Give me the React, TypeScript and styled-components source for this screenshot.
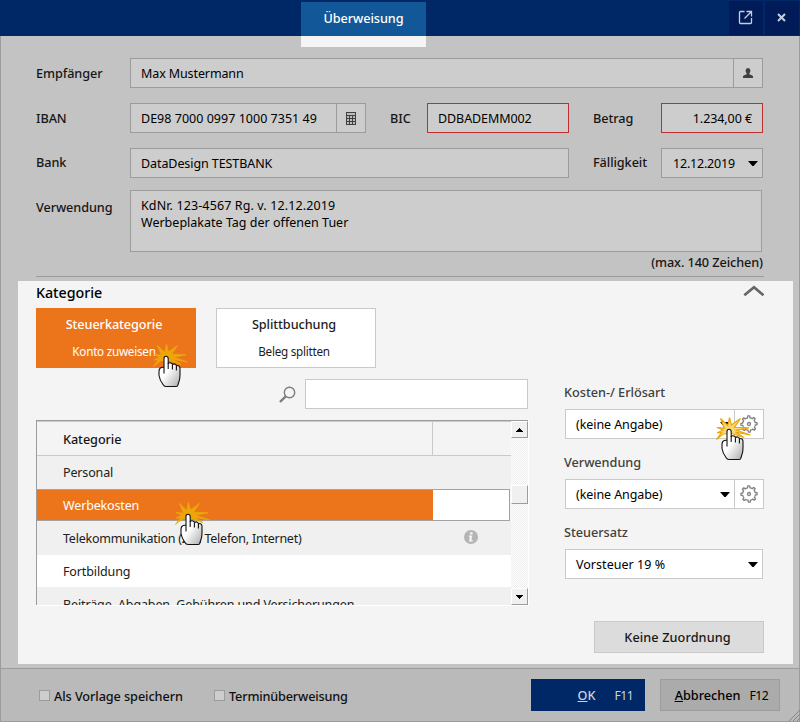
import React from "react";
import styled, { createGlobalStyle, css } from "styled-components";

const Global = createGlobalStyle`
  * { box-sizing: border-box; }
  body { margin: 0; background: #c3c3c3; }
`;

const medium = css`
  font-size: 12.7px;
  font-weight: 500;
  letter-spacing: -0.08px;
`;

const Window = styled.div`
  width: 800px;
  height: 722px;
  display: flex;
  flex-direction: column;
  overflow: hidden;
  font-family: "Noto Sans", "Open Sans", sans-serif;
  font-size: 12.5px;
  line-height: 18px;
  color: #000;
  background: #c3c3c3;
  white-space: nowrap;
`;

const TitleBar = styled.header`
  height: 36px;
  flex: none;
  display: flex;
  align-items: flex-start;
  padding: 0 1px 0 301px;
  background: #002766;
`;

const ActiveTab = styled.div`
  width: 125px;
  height: 45px;
  flex: none;
  margin: 2px auto 0 0;
  border-bottom: 11px solid #f4f4f4;
  background: #125899;
  color: #fff;
  ${medium}
  line-height: 33px;
  text-align: center;
`;

const TitleButton = styled.button`
  width: 34px;
  height: 34px;
  margin: 1px 0 0 2px;
  padding: 0 2px 2px 0;
  border: 0;
  display: flex;
  align-items: center;
  justify-content: center;
  background: #001b57;
`;

const Body = styled.main`
  flex: 1;
  display: flex;
  flex-direction: column;
  border: solid #9c9c9c;
  border-width: 0 1px;
`;

const Form = styled.section`
  height: 241px;
  margin: 0 35px;
  padding-top: 22px;
  display: flex;
  flex-direction: column;
  border-bottom: 1px solid #9c9c9c;
`;

const FormRow = styled.div<{ $gap?: number }>`
  display: flex;
  align-items: flex-start;
  margin-bottom: ${(p) => p.$gap ?? 15}px;
`;

const Label = styled.label<{ $w: number; $top?: number }>`
  width: ${(p) => p.$w}px;
  flex: none;
  padding-top: ${(p) => p.$top ?? 6}px;
  ${medium}
  color: #161616;
`;

const Field = styled.div<{ $w: number; $mr?: number; $error?: boolean; $right?: boolean }>`
  width: ${(p) => p.$w}px;
  height: 30px;
  flex: none;
  margin-right: ${(p) => p.$mr ?? 0}px;
  display: flex;
  align-items: stretch;
  justify-content: ${(p) => (p.$right ? "flex-end" : "space-between")};
  padding-left: 10px;
  ${(p) => p.$right && css`padding-right: 10px;`}
  border: 1px solid ${(p) => (p.$error ? "#c02f2f" : "#9c9c9c")};
  background: #cdcdcd;
  line-height: 29px;
`;

const Purpose = styled.div`
  width: 632px;
  height: 62px;
  padding: 6px 10px;
  border: 1px solid #9c9c9c;
  background: #cdcdcd;
  line-height: 17px;
`;

const Value = styled.span<{ $ls?: number; $pad?: number }>`
  letter-spacing: ${(p) => p.$ls ?? -0.08}px;
  padding-left: ${(p) => p.$pad ?? 0}px;
`;

const FieldButton = styled.span<{ $light?: boolean }>`
  width: 29px;
  display: flex;
  align-items: center;
  justify-content: center;
  padding: ${(p) => (p.$light ? "0 1px 1px 0" : "0")};
  border-left: 1px solid ${(p) => (p.$light ? "#c9c9c9" : "#9c9c9c")};
`;

const ArrowBox = styled.span`
  display: flex;
  align-items: center;
  margin-left: auto;
  padding-right: 4px;
`;

const Hint = styled.div`
  align-self: flex-end;
  margin: 1px 1px 0 0;
  ${medium}
  color: #161616;
`;

const Panel = styled.section`
  width: 775px;
  height: 383px;
  margin: 4px 0 0 17px;
  padding: 0 29px 0 18px;
  display: flex;
  flex-direction: column;
  background: #f4f4f4;
`;

const PanelHead = styled.h2`
  height: 27px;
  margin: 0;
  display: flex;
  justify-content: space-between;
  align-items: flex-start;
  padding-top: 3px;
  font-size: 14.3px;
  font-weight: 500;
  letter-spacing: -0.05px;
`;

const Tiles = styled.div`
  display: flex;
  gap: 20px;
`;

const Tile = styled.button<{ $active?: boolean }>`
  position: relative;
  width: 160px;
  height: 60px;
  padding: 6px 4px 0 0;
  display: flex;
  flex-direction: column;
  align-items: center;
  gap: 9px;
  border: 1px solid ${(p) => (p.$active ? "#ec751b" : "#c9c9c9")};
  background: ${(p) => (p.$active ? "#ec751b" : "#fff")};
  color: ${(p) => (p.$active ? "#fff" : "#1c1c1c")};
  font: inherit;
  line-height: 18px;
`;

const TileTitle = styled.span`
  ${medium}
`;

const TileSub = styled.span`
  font-size: 11.7px;
  letter-spacing: -0.25px;
`;

const Columns = styled.div`
  display: flex;
  justify-content: space-between;
`;

const LeftCol = styled.div`
  width: 493px;
  padding-top: 11px;
`;

const SearchRow = styled.div`
  display: flex;
  justify-content: flex-end;
  align-items: center;
  gap: 9px;
  padding-right: 1px;
  margin-bottom: 11px;
`;

const SearchInput = styled.input`
  width: 223px;
  height: 30px;
  border: 1px solid #c9c9c9;
  background: #fff;
  outline: none;
`;

const Table = styled.div`
  width: 493px;
  height: 186px;
  display: flex;
  border-bottom: 1px solid #fff;
  border-right: 1px solid #fff;
`;

const Grid = styled.div`
  width: 475px;
  overflow: hidden;
  border-left: 1px solid #9c9c9c;
  border-top: 1px solid #9c9c9c;
`;

const HeadRow = styled.div`
  height: 35px;
  display: flex;
  border-top: 1px solid #c9c9c9;
  border-bottom: 1px solid #c9c9c9;
`;

const HeadCell = styled.div<{ $w?: number }>`
  width: ${(p) => (p.$w ? `${p.$w}px` : "auto")};
  padding: 8px 0 0 26px;
  border-right: ${(p) => (p.$w ? "1px solid #c9c9c9" : "0")};
  ${medium}
  color: #161616;
`;

const Row = styled.div<{ $bg?: string; $h?: number; $top?: number }>`
  height: ${(p) => p.$h ?? 33}px;
  display: flex;
  align-items: flex-start;
  justify-content: space-between;
  padding: ${(p) => p.$top ?? 8}px 33px 0 26px;
  background: ${(p) => p.$bg ?? "#f0f0f0"};
  color: #202020;
`;

const SelectedRow = styled.div`
  position: relative;
  height: 32px;
  width: 473px;
  border: 1px solid #a3a3a3;
  border-left-width: 0;
  background: #fff;
  color: #fff;
`;

const SelectedCell = styled.div`
  width: 396px;
  height: 30px;
  padding: 7px 0 0 26px;
  background: #ec751b;
`;

const Scrollbar = styled.div`
  width: 17px;
  display: flex;
  flex-direction: column;
  border-top: 1px solid #9c9c9c;
  background: repeating-conic-gradient(#fff 0 25%, #eeeeee 0 50%) 0 0 / 2px 2px;
`;

const ScrollPiece = styled.div<{ $h: number; $mt?: number }>`
  height: ${(p) => p.$h}px;
  margin-top: ${(p) => p.$mt ?? 0}px;
  display: flex;
  align-items: center;
  justify-content: center;
  border: 1px solid #fff;
  border-right-color: #9c9c9c;
  border-bottom-color: #9c9c9c;
  background: #f0f0f0;
`;

const RightCol = styled.div`
  width: 200px;
  padding-top: 15px;
  display: flex;
  flex-direction: column;
`;

const SideLabel = styled.label`
  height: 26px;
  ${medium}
  letter-spacing: -0.02px;
  color: #404040;
`;

const Select = styled.div<{ $w?: number }>`
  position: relative;
  width: ${(p) => p.$w ?? 199}px;
  height: 30px;
  margin: 0 0 14px 1px;
  padding-left: 10px;
  display: flex;
  border: 1px solid #c9c9c9;
  background: #fff;
  line-height: 29px;
`;

const ClearButton = styled.button`
  width: 170px;
  height: 32px;
  margin-top: 28px;
  padding: 0 3px 0 0;
  align-self: flex-end;
  border: 1px solid #c9c9c9;
  background: #dcdcdc;
  color: #161616;
  font-family: inherit;
  ${medium}
  letter-spacing: 0.1px;
`;

const Footer = styled.footer`
  height: 54px;
  flex: none;
  display: flex;
  align-items: flex-start;
  padding: 10px 19px 0 38px;
  border: 1px solid #9c9c9c;
  background: #bababa;
  position: relative;
`;

const Check = styled.label<{ $w: number }>`
  width: ${(p) => p.$w}px;
  display: flex;
  align-items: center;
  gap: 4px;
  padding-top: 8px;
  ${medium}
  color: #101010;
`;

const CheckText = styled.span<{ $ls?: number }>`
  letter-spacing: ${(p) => p.$ls ?? -0.08}px;
`;

const Box = styled.span`
  width: 11px;
  height: 11px;
  margin-top: -1px;
  border: 1px solid #9c9c9c;
  background: #cdcdcd;
`;

const Action = styled.button<{ $primary?: boolean }>`
  width: ${(p) => (p.$primary ? 114 : 120)}px;
  height: 32px;
  margin-left: ${(p) => (p.$primary ? "auto" : "15px")};
  padding: 0 11px;
  display: flex;
  align-items: center;
  justify-content: flex-end;
  gap: ${(p) => (p.$primary ? 19 : 9)}px;
  border: 1px solid ${(p) => (p.$primary ? "#002766" : "#9c9c9c")};
  background: ${(p) => (p.$primary ? "#002766" : "#ababab")};
  color: ${(p) => (p.$primary ? "#cdd3de" : "#000")};
  font-family: inherit;
  ${medium}
  letter-spacing: 0;
`;

const Key = styled.span`
  font-size: 12.2px;
  font-weight: 400;
  letter-spacing: -0.6px;
`;

const Grip = styled.svg`
  position: absolute;
  right: -1px;
  bottom: 0;
`;

const CursorSvg = styled.svg<{ $x: number; $y: number }>`
  position: absolute;
  left: ${(p) => p.$x}px;
  top: ${(p) => p.$y}px;
  z-index: 2;
  overflow: visible;
`;

function ClickCursor({ x, y, on }: { x: number; y: number; on: "orange" | "white" }) {
  const rays =
    "5.5,2.5 12.8,9.5 14.5,1.5 16.4,9 25.5,2.5 19.5,11.3 34,11.8 21.5,14.2 35.5,19 20.5,16.2 29,21.5 17,17.5 8,18 1.5,23.5 6.5,16.5 2,17 8,14 2,11.5 9.5,12.2";
  return (
    <CursorSvg $x={x} $y={y} width="36" height="45" viewBox="0 0 36 45">
      <defs>
        <linearGradient id={`hand${x}`} x1="0" y1="0" x2="1" y2="1">
          <stop offset="0.45" stopColor="#fff" />
          <stop offset="1" stopColor="#aaa" />
        </linearGradient>
      </defs>
      <polygon
        points={rays}
        fill={on === "orange" ? "#eda50a" : "#f8d878"}
        stroke="#eba70c"
        strokeWidth={on === "orange" ? 0.8 : 1.2}
      />
      <path
        d="M12 30.5V15.5q0-2.3 2-2.3t2.2 2.3V20.5q1-1.2 2.6-.6t1.8 1.6q1.4-1 2.6-.3t1.3 1.7q1.6-.8 2.6.2t.9 2.4V32q0 4-1.2 7l-.9 3q-.2 1.5-1.8 1.5H14q-2 0-3-2-3.5-5-4-9V28q.3-3 2.4-3.5T12 24.5"
        fill={`url(#hand${x})`}
        stroke="#111"
        strokeWidth="1.1"
        strokeLinejoin="round"
      />
      <path d="M16.2 20v6M20.4 21.5v5M24.4 23v4.5" stroke="#111" strokeWidth="1.1" fill="none" />
    </CursorSvg>
  );
}

const DownArrow = () => (
  <svg width="10" height="5" viewBox="0 0 10 5">
    <path d="M0 0h10L5.600 5h-1.200z" fill="#000" />
  </svg>
);

const ScrollArrow = ({ up }: { up?: boolean }) => (
  <svg width="7" height="4" viewBox="0 0 7 4" shapeRendering="crispEdges">
    <path d={up ? "M3 0h1v1h1v1h1v1h1v1H0V3h1V2h1V1h1z" : "M0 0h7v1H6v1H5v1H4v1H3V3H2V2H1V1H0z"} />
  </svg>
);

function Gear() {
  const teeth = Array.from({ length: 80 }, (_, i) => {
    const a = (i / 80) * Math.PI * 2;
    const r = i % 10 < 2 || i % 10 > 7 ? 8.1 : 6.3;
    return `${(9 + r * Math.cos(a)).toFixed(2)},${(9 + r * Math.sin(a)).toFixed(2)}`;
  }).join(" ");
  return (
    <svg width="18" height="18" viewBox="0 0 18 18" fill="none" stroke="#808080" strokeWidth="1.3">
      <polygon points={teeth} strokeLinejoin="round" />
      <circle cx="9" cy="9" r="1.5" />
    </svg>
  );
}

export default function App() {
  return (
    <>
      <Global />
      <Window>
        <TitleBar>
          <ActiveTab>Überweisung</ActiveTab>
          <TitleButton aria-label="Lösen">
            <svg width="15" height="15" viewBox="0 0 15 15" fill="none" stroke="#c7d0dc" strokeWidth="1.3">
              <path d="M6.5 1.5H2.5q-1 0-1 1v10q0 1 1 1h10q1 0 1-1V8" />
              <path d="M6.5 8.5L13 2M8.5 1.5h5v5" />
            </svg>
          </TitleButton>
          <TitleButton aria-label="Schließen">
            <svg width="9" height="9" viewBox="0 0 9 9" fill="none" stroke="#c7cfdb" strokeWidth="2">
              <path d="M1 1l7 7M8 1L1 8" />
            </svg>
          </TitleButton>
        </TitleBar>

        <Body>
          <Form>
            <FormRow>
              <Label $w={94}>Empfänger</Label>
              <Field $w={633}>
                <Value $ls={-0.11}>Max Mustermann</Value>
                <FieldButton>
                  <svg width="10" height="10" viewBox="0 0 10 10" fill="#404040">
                    <path d="M5 0q2.400 0 2.400 2.500 0 1.500-1 2.700v1L9.300 7.500q.7.400.7 1.200V10H0V8.700q0-.8.700-1.200L3.600 6.200v-1q-1-1.200-1-2.700Q2.600 0 5 0z" />
                  </svg>
                </FieldButton>
              </Field>
            </FormRow>
            <FormRow>
              <Label $w={94}>IBAN</Label>
              <Field $w={236} $mr={24}>
                <Value $ls={0.02}>DE98 7000 0997 1000 7351 49</Value>
                <FieldButton>
                  <svg width="10" height="13" viewBox="0 0 10 13" shapeRendering="crispEdges">
                    <path d="M0 0h10v13H0z" fill="#404040" />
                    <path d="M1 1h8v2H1zM1 4h2v2H1zM4 4h2v2H4zM7 4h2v2H7zM1 7h2v2H1zM4 7h2v2H4zM7 7h2v2H7zM1 10h2v2H1zM4 10h2v2H4zM7 10h2v2H7z" fill="#bdbdbd" />
                  </svg>
                </FieldButton>
              </Field>
              <Label $w={37}>BIC</Label>
              <Field $w={142} $mr={24} $error>
                <Value>DDBADEMM002</Value>
              </Field>
              <Label $w={68}>Betrag</Label>
              <Field $w={102} $error $right>
                <Value>1.234,00 €</Value>
              </Field>
            </FormRow>
            <FormRow $gap={12}>
              <Label $w={94} $top={5}>Bank</Label>
              <Field $w={439} $mr={24}>
                <Value>DataDesign TESTBANK</Value>
              </Field>
              <Label $w={68} $top={5}>Fälligkeit</Label>
              <Field $w={102}>
                <Value $pad={1} $ls={-0.2}>12.12.2019</Value>
                <ArrowBox>
                  <DownArrow />
                </ArrowBox>
              </Field>
            </FormRow>
            <FormRow $gap={0}>
              <Label $w={94} $top={8}>Verwendung</Label>
              <Purpose>
                <Value $ls={0.12}>KdNr. 123-4567 Rg. v. 12.12.2019</Value>
                <br />
                <Value $ls={0.01}>Werbeplakate Tag der offenen Tuer</Value>
              </Purpose>
            </FormRow>
            <Hint>(max. 140 Zeichen)</Hint>
          </Form>

          <Panel>
            <PanelHead>
              Kategorie
              <svg width="21" height="14" viewBox="0 0 21 14" fill="none" stroke="#666" strokeWidth="2.7">
                <path d="M1.3 11.3L11 3.3l9.500 8" />
              </svg>
            </PanelHead>
            <Tiles>
              <Tile $active>
                <TileTitle>Steuerkategorie</TileTitle>
                <TileSub>Konto zuweisen</TileSub>
                <ClickCursor x={115} y={34} on="orange" />
              </Tile>
              <Tile>
                <TileTitle>Splittbuchung</TileTitle>
                <TileSub>Beleg splitten</TileSub>
              </Tile>
            </Tiles>
            <Columns>
              <LeftCol>
                <SearchRow>
                  <svg width="17" height="17" viewBox="0 0 17 17" fill="none" stroke="#7d7d7d">
                    <circle cx="10.5" cy="6.5" r="5.2" strokeWidth="1.4" />
                    <path d="M6.7 10.3L1 16" strokeWidth="2.4" />
                  </svg>
                  <SearchInput />
                </SearchRow>
                <Table>
                  <Grid>
                    <HeadRow>
                      <HeadCell $w={396}>Kategorie</HeadCell>
                      <HeadCell />
                    </HeadRow>
                    <Row>
                      <Value $ls={-0.15}>Personal</Value>
                    </Row>
                    <SelectedRow>
                      <SelectedCell>
                        <Value $ls={-0.15}>Werbekosten</Value>
                      </SelectedCell>
                      <ClickCursor x={137} y={11} on="orange" />
                    </SelectedRow>
                    <Row $h={34} $top={9}>
                      <Value $ls={-0.24}>Telekommunikation (z.B. Telefon, Internet)</Value>
                      <svg width="14" height="14" viewBox="0 0 14 14">
                        <circle cx="7" cy="7" r="7" fill="#b5b5b5" />
                        <path d="M6 2.200h2.600v2.200H6zM4.800 5.400h3.500l-.9 4.800h1.400v1.300H4.900l.9-4.800h-1z" fill="#f4f4f4" />
                      </svg>
                    </Row>
                    <Row $bg="#fff" $h={32}>
                      <Value $ls={-0.12}>Fortbildung</Value>
                    </Row>
                    <Row $top={9}>
                      <Value $ls={-0.12}>Beiträge, Abgaben, Gebühren und Versicherungen</Value>
                    </Row>
                  </Grid>
                  <Scrollbar>
                    <ScrollPiece $h={17}>
                      <ScrollArrow up />
                    </ScrollPiece>
                    <ScrollPiece $h={19} $mt={47} />
                    <ScrollPiece $h={17} $mt={84}>
                      <ScrollArrow />
                    </ScrollPiece>
                  </Scrollbar>
                </Table>
              </LeftCol>
              <RightCol>
                <SideLabel>Kosten-/ Erlösart</SideLabel>
                <Select>
                  <Value>(keine Angabe)</Value>
                  <ArrowBox>
                    <DownArrow />
                  </ArrowBox>
                  <FieldButton $light>
                    <Gear />
                  </FieldButton>
                  <ClickCursor x={149} y={6} on="white" />
                </Select>
                <SideLabel>Verwendung</SideLabel>
                <Select>
                  <Value>(keine Angabe)</Value>
                  <ArrowBox>
                    <DownArrow />
                  </ArrowBox>
                  <FieldButton $light>
                    <Gear />
                  </FieldButton>
                </Select>
                <SideLabel>Steuersatz</SideLabel>
                <Select $w={198}>
                  <Value $ls={0.03}>Vorsteuer 19 %</Value>
                  <ArrowBox>
                    <DownArrow />
                  </ArrowBox>
                </Select>
                <ClearButton>Keine Zuordnung</ClearButton>
              </RightCol>
            </Columns>
          </Panel>
        </Body>

        <Footer>
          <Check $w={175}>
            <Box />
            <CheckText>Als Vorlage speichern</CheckText>
          </Check>
          <Check $w={160}>
            <Box />
            <CheckText $ls={-0.17}>Terminüberweisung</CheckText>
          </Check>
          <Action $primary>
            <span>
              <u>O</u>K
            </span>
            <Key>F11</Key>
          </Action>
          <Action>
            <span>
              <u>A</u>bbrechen
            </span>
            <Key>F12</Key>
          </Action>
          <Grip width="11" height="11" viewBox="0 0 11 11" stroke="#858585" strokeWidth="1">
            <path d="M0 11L11 0M4 11L11 4M8 11L11 8" />
          </Grip>
        </Footer>
      </Window>
    </>
  );
}
